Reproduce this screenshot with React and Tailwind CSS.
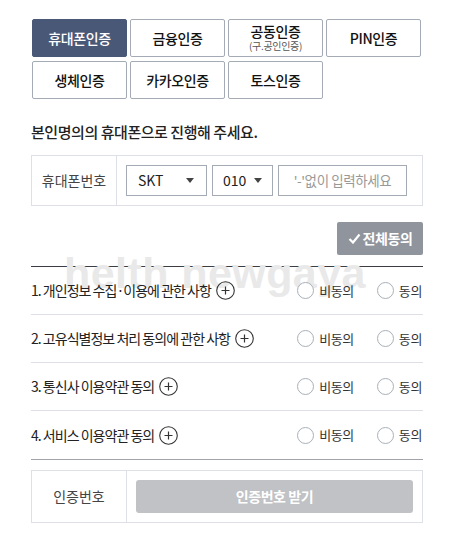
import { useState } from 'react';

const tabs = [
    { label: '휴대폰인증' },
    { label: '금융인증' },
    { label: '공동인증', sub: '(구.공인인증)' },
    { label: 'PIN인증' },
    { label: '생체인증' },
    { label: '카카오인증' },
    { label: '토스인증' },
];

const terms = [
    '1. 개인정보 수집·이용에 관한 사항',
    '2. 고유식별정보 처리 동의에 관한 사항',
    '3. 통신사 이용약관 동의',
    '4. 서비스 이용약관 동의',
];

function Caret() {
    return (
        <svg width="8" height="5" viewBox="0 0 8 5" className="shrink-0">
            <path d="M0 0h8L4 5z" fill="#444" />
        </svg>
    );
}

function PlusCircle() {
    return (
        <svg width="19" height="19" viewBox="0 0 19 19" className="shrink-0">
            <circle cx="9.5" cy="9.5" r="8.8" fill="none" stroke="#333" strokeWidth="1.1" />
            <path d="M9.5 5.5v8M5.5 9.5h8" stroke="#333" strokeWidth="1.2" />
        </svg>
    );
}

function Radio({ label }) {
    return (
        <label className="flex items-center gap-[5px] cursor-pointer">
            <span className="w-[17px] h-[17px] rounded-full border border-[#a9b0b9] bg-white" />
            <span className="text-[13px] text-[#333] tracking-[-0.03em]">{label}</span>
        </label>
    );
}

export default function App() {
    const [active, setActive] = useState(0);

    return (
        <div className="w-[450px] h-[553px] bg-white" style={{ fontFamily: '"Noto Sans CJK KR", "Noto Sans", sans-serif' }}>
            <div className="pl-[31px] w-[423px] pt-[19px]">

                {/* Auth method tabs */}
                <div className="grid grid-cols-4 gap-x-[3px] gap-y-[4px] w-[389px] ml-[1px]">
                    {tabs.map((t, i) => (
                        <button
                            key={t.label}
                            type="button"
                            onClick={() => setActive(i)}
                            className={`h-[38px] rounded-[2px] border flex flex-col items-center justify-center leading-none ${active === i
                                ? 'bg-[#4a5878] border-[#4a5878] text-white'
                                : 'bg-white border-[#a4abb5] text-[#111]'
                                }`}
                        >
                            <span className={`text-[14px] font-medium tracking-[-0.03em] ${t.sub ? 'mt-[-2px]' : ''}`}>{t.label}</span>
                            {t.sub && (
                                <span className="text-[10px] text-[#555] mt-[3px] tracking-[-0.03em]">{t.sub}</span>
                            )}
                        </button>
                    ))}
                </div>

                <p className="mt-[22px] text-[15px] font-medium text-[#222] tracking-[-0.03em] leading-[22px]">
                    본인명의의 휴대폰으로 진행해 주세요.
                </p>

                {/* Phone number */}
                <div className="mt-[12px] h-[51px] border border-[#dde0e6] flex">
                    <div className="w-[85px] border-r border-[#dde0e6] flex items-center justify-center text-[14px] text-[#444]">
                        휴대폰번호
                    </div>
                    <div className="flex items-center pl-[9px] gap-[5px]">
                        <div className="w-[81px] h-[31px] border border-[#a4abb5] flex items-center justify-between pl-[11px] pr-[12px] text-[14px] text-[#222]">
                            SKT <Caret />
                        </div>
                        <div className="w-[61px] h-[31px] border border-[#a4abb5] flex items-center justify-between pl-[10px] pr-[10px] text-[14px] text-[#222]">
                            010 <Caret />
                        </div>
                        <div className="w-[129px] h-[31px] border border-[#a4abb5] flex items-center justify-center text-[13.5px] text-[#999] tracking-[-0.03em]">
                            '-'없이 입력하세요
                        </div>
                    </div>
                </div>

                <div className="flex justify-end mt-[16px]">
                    <button type="button" className="w-[86px] h-[33px] rounded-[2px] bg-[#8f949d] text-white text-[14px] font-bold flex items-center justify-center gap-[2px] tracking-[-0.03em]">
                        <svg width="13" height="11" viewBox="0 0 13 11">
                            <path d="M1.5 6l3.5 3.5L11.5 1.5" fill="none" stroke="#fff" strokeWidth="2.2" />
                        </svg>
                        전체동의
                    </button>
                </div>

                {/* Terms */}
                <div className="relative mt-[11px] border-t border-[#3a3d44] border-b border-b-[#a0a4aa]">
                    <div className="absolute left-[33px] top-[-15px] text-[43px] font-bold text-[#e9e9e9] tracking-[0.01em] leading-none pointer-events-none select-none" style={{ fontFamily: '"Liberation Sans", Arial, sans-serif' }}>
                        helth newgaya
                    </div>
                    {terms.map((t, i) => (
                        <div key={t} className={`relative h-[48px] flex items-center ${i < terms.length - 1 ? 'border-b border-[#dde0e6]' : ''}`}>
                            <div className="flex items-center gap-[5px] flex-1">
                                <span className="text-[14px] text-[#222] tracking-[-0.07em]">{t}</span>
                                <PlusCircle />
                            </div>
                            <div className="flex items-center gap-[23px] mr-[1px]">
                                <Radio label="비동의" />
                                <Radio label="동의" />
                            </div>
                        </div>
                    ))}
                </div>

                {/* Auth number */}
                <div className="mt-[10px] h-[53px] border border-[#dde0e6] flex">
                    <div className="w-[95px] border-r border-[#dde0e6] flex items-center justify-center text-[14px] text-[#444]">
                        인증번호
                    </div>
                    <div className="flex-1 flex items-center pl-[9px] pr-[9px]">
                        <button type="button" className="w-full h-[33px] rounded-[3px] bg-[#c0c2c6] text-white text-[14px] font-bold tracking-[-0.03em]">
                            인증번호 받기
                        </button>
                    </div>
                </div>
            </div>
        </div>
    );
}
